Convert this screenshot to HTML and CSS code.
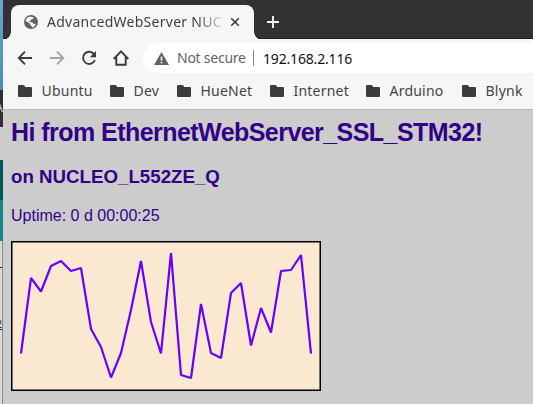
FILE: index.html
```
<!DOCTYPE html>
<html lang="en">
<head>
<meta charset="utf-8">
<title>AdvancedWebServer NUCLEO_L552ZE_Q</title>
<link rel="stylesheet" href="styles.css">
</head>
<body>
<aside class="desktop">
  <div class="wallpaper"></div>
  <div class="titlebar"><span>A</span></div>
  <div class="menu"></div>
  <div class="teal-dark"></div>
  <div class="teal"></div>
  <div class="editor"><span class="dash"></span><span class="digit">2</span></div>
</aside>
<div class="window">
  <header class="tabs">
    <div class="tab">
      <svg class="globe" viewBox="0 0 14 14" width="14" height="14"><circle cx="7" cy="7" r="7" fill="#5f6368"/><path d="M7.2 1.8 9.8 2.4 8.9 3.9 7.4 4.3 6.7 5.6 5.2 6 5.6 7.1 8.3 7.2 9.2 8.8 11 9.1 11.8 8.5 11.3 10.6 9.3 12.2 7.7 12.5 7.8 11 6 9.7 5.7 8.3 1.5 6 2.8 3.1 5 1.8Z" fill="#f6f6f6"/></svg>
      <span class="title">AdvancedWebServer NUC</span>
      <svg class="close" viewBox="0 0 10 10" width="10" height="10"><path d="M1.2 1.2 8.8 8.8M8.8 1.2 1.2 8.8" stroke="#3c3c3c" stroke-width="1.6"/></svg>
    </div>
    <svg class="plus" viewBox="0 0 12 12" width="12" height="12"><path d="M6 0V12M0 6H12" stroke="#fff" stroke-width="1.8"/></svg>
  </header>
  <nav class="toolbar">
    <svg viewBox="0 0 16 16" width="16" height="16"><path d="M15 8H2M8 1.7 1.8 8 8 14.3" fill="none" stroke="#3c3c3c" stroke-width="1.9"/></svg>
    <svg viewBox="0 0 16 16" width="16" height="16"><path d="M1 8H14M8 1.7 14.2 8 8 14.3" fill="none" stroke="#a5a5a5" stroke-width="1.9"/></svg>
    <svg viewBox="0 0 16 16" width="16" height="16"><path d="M13.3 4.5A6.1 6.1 0 1 0 13.9 10" fill="none" stroke="#3c3c3c" stroke-width="1.9"/><path d="M15 1V7.3H8.8Z" fill="#3c3c3c"/></svg>
    <svg viewBox="0 0 16 16" width="16" height="16"><path d="M.7 9 8 1.4 15.3 9M3.3 7V14.8H12.7V7" fill="none" stroke="#3c3c3c" stroke-width="1.9"/></svg>
    <div class="address">
      <svg viewBox="0 0 15 13" width="15" height="13"><path d="M7.5 0 15 13H0Z" fill="#5f6368"/><path d="M7.5 4.6V8.5M7.5 9.7V11.3" stroke="#fff" stroke-width="1.6"/></svg>
      <span class="insecure">Not secure</span>
      <span class="url">192.168.2.116</span>
    </div>
  </nav>
  <nav class="bookmarks">
    <a class="b1"><i></i><span>Ubuntu</span></a>
    <a class="b2"><i></i><span>Dev</span></a>
    <a class="b3"><i></i><span>HueNet</span></a>
    <a class="b4"><i></i><span>Internet</span></a>
    <a class="b5"><i></i><span>Arduino</span></a>
    <a class="b6"><i></i><span>Blynk</span></a>
  </nav>
  <main>
    <h2>Hi from EthernetWebServer_SSL_STM32!</h2>
    <h3>on NUCLEO_L552ZE_Q</h3>
    <p>Uptime: 0 d 00:00:25</p>
    <svg class="chart" width="310" height="150">
      <rect width="310" height="150" fill="#fae8d0" stroke="#000" stroke-width="3"/>
      <polyline fill="none" stroke="#60f" stroke-width="2.2" stroke-linejoin="bevel" points="10,112.5 20,37 30,50.5 40,25 50,20 60,30 70,27 80,88 90,106 100,136.5 110,112 120,69 130,20 140,81 150,112.5 160,12 170,134 180,137 190,63 200,112 210,117 220,52 230,42 240,104.5 250,67 260,91.5 270,30 280,29 290,14 300,112.5"/>
    </svg>
  </main>
</div>
</body>
</html>
```
FILE: styles.css
```
* { box-sizing: border-box; }
body { margin: 0; width: 533px; height: 404px; overflow: hidden; display: flex; font-family: "Noto Sans", sans-serif; background: #ccc; }
.desktop { width: 3px; flex: none; overflow: hidden; display: flex; flex-direction: column; }
.wallpaper { height: 90px; background: linear-gradient(#68a9d0, #4b8ab3); }
.titlebar { height: 37px; background: #302e2e; color: #ddd; font-size: 12px; line-height: 36px; direction: rtl; }
.menu { height: 33px; background: #ccc; }
.teal-dark { height: 40px; background: #00565a; }
.teal { height: 41px; background: #17838a; }
.editor { flex: 1; background: #dadada; border-right: 1px solid #888; color: #222; font-size: 10px; direction: rtl; }
.dash { display: block; height: 1px; margin-top: 26px; background: #222; }
.digit { display: block; margin-top: 48px; line-height: 16px; text-decoration: underline; }
.window { width: 530px; flex: none; background: #f6f6f6; }
.tabs { height: 39px; display: flex; background: #333132; border-bottom: 1px solid #201e1f; padding: 5px 0 0 8px; }
.tab { position: relative; width: 243px; height: 34px; padding-left: 13px; display: flex; align-items: center; background: #f6f6f6; border-radius: 8px 8px 0 0; }
.tab::before, .tab::after { content: ""; position: absolute; bottom: 0; width: 8px; height: 8px; }
.tab::before { left: -8px; background: radial-gradient(circle at 0 0, transparent 7.5px, #f6f6f6 8px); }
.tab::after { right: -8px; background: radial-gradient(circle at 100% 0, transparent 7.5px, #f6f6f6 8px); }
.tab { height: 35px; margin-bottom: -1px; padding-bottom: 1px; flex: none; }
.title { width: 177px; margin-left: 9px; overflow: hidden; white-space: nowrap; font-size: 14px; letter-spacing: .27px; line-height: 24px; color: #3f3f3f; -webkit-mask-image: linear-gradient(90deg, #000 150px, transparent 180px); mask-image: linear-gradient(90deg, #000 150px, transparent 180px); }
.close { margin-left: 6px; }
.plus { margin: 11px 0 0 13px; }
.toolbar { height: 34px; margin-top: 4px; display: flex; align-items: flex-start; gap: 16px; padding-left: 14px; }
.toolbar > svg { margin-top: 7px; flex: none; }
.address { flex: 1; height: 30px; margin-left: -2px; padding-left: 11px; display: flex; align-items: center; background: #fff; border-radius: 15px 0 0 15px; font-size: 14px; white-space: nowrap; }
.insecure { width: 77px; margin-left: 8px; border-right: 1px solid #888; color: #5f6368; letter-spacing: -.25px; line-height: 16px; }
.url { margin-left: 9px; color: #111; letter-spacing: -.17px; }
.bookmarks { height: 33px; display: flex; border-bottom: 1px solid #bbb; padding: 0 0 5px 15px; font-size: 14px; letter-spacing: .22px; color: #444; }
.bookmarks a { display: flex; align-items: center; flex: none; }
.bookmarks i { position: relative; width: 14px; height: 10px; margin: 2px 9.5px 0 0; background: #3c3c3c; border-radius: 0 1px 1px 1px; }
.bookmarks i::before { content: ""; position: absolute; left: 0; top: -2px; width: 7px; height: 3px; background: #3c3c3c; border-radius: 1px 2px 0 0; }
.b1 { width: 92px; } .b2 { width: 67px; } .b3 { width: 93px; } .b4 { width: 96px; } .b5 { width: 96px; }
main { height: 294px; padding: 8px 0 0 8px; background: #ccc; color: #308; font-family: "Liberation Sans", Arial, sans-serif; }
h2 { margin: 0; font-size: 25px; letter-spacing: -.55px; line-height: 28px; white-space: nowrap; }
h3 { margin: 19px 0 0; font-size: 18.72px; line-height: 23px; }
p { margin: 19px 0 0; font-size: 16px; line-height: 18px; }
.chart { display: block; margin-top: 16px; }
```
